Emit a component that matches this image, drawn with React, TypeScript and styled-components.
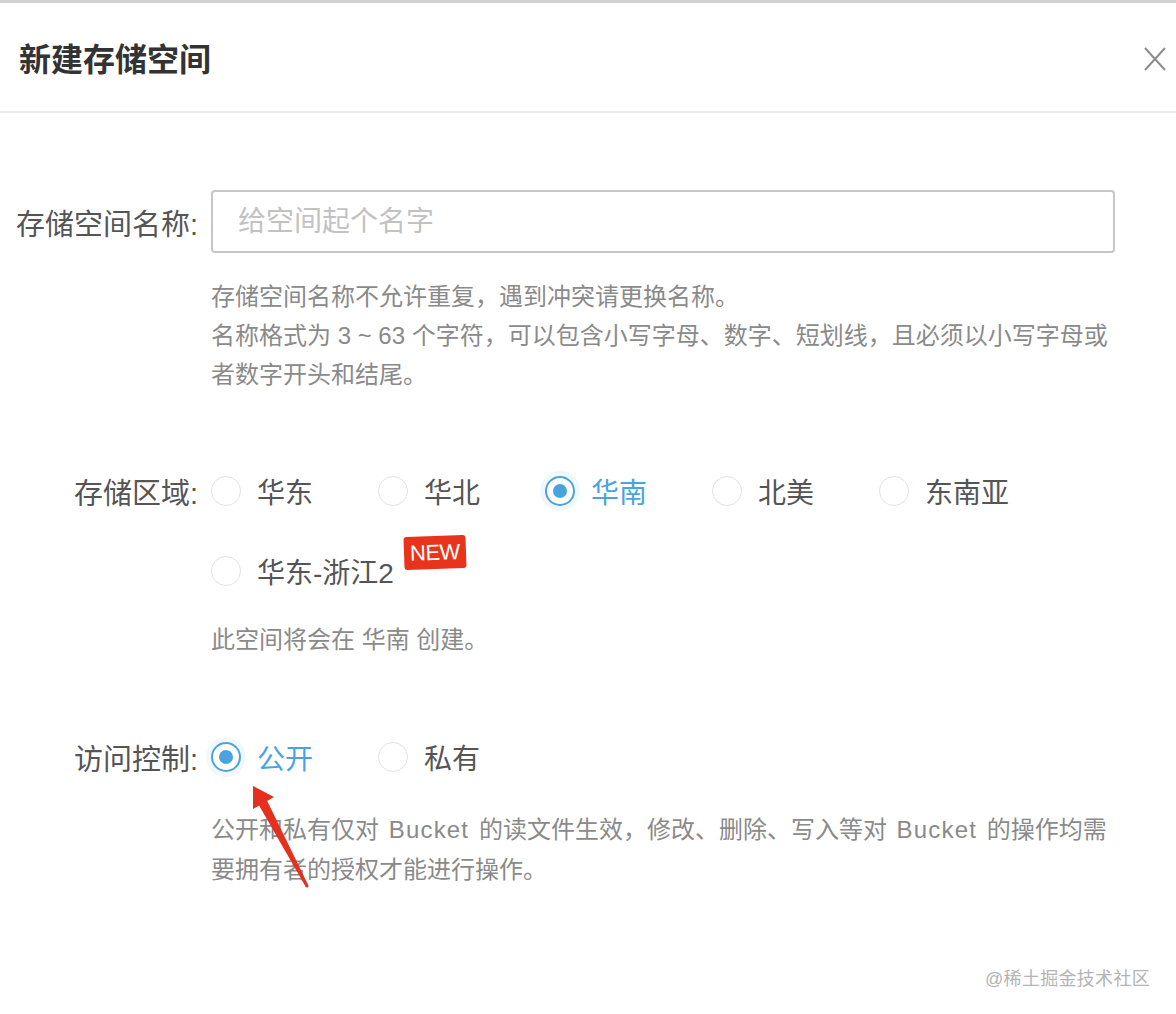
import React from "react";
import styled, {createGlobalStyle} from "styled-components";

const GlobalStyle = createGlobalStyle`
  html, body {
    margin: 0;
    padding: 0;
    background: #ffffff;
  }
  body {
    font-family: "Liberation Sans", "Noto Sans CJK SC", sans-serif;
  }
  * {
    box-sizing: border-box;
  }
`;

const blue = "#4aa3de";

const Dialog = styled.div`
  position: relative;
  width: 1176px;
  height: 1014px;
  background: #ffffff;
  border-top: 3px solid #d2d2d2;
  overflow: hidden;
`;

const Header = styled.div`
  height: 110px;
  display: flex;
  align-items: center;
  justify-content: space-between;
  padding: 0 8px 0 19px;
  border-bottom: 2px solid #e9e9e9;
`;

const Title = styled.h1`
  margin: 0;
  font-size: 32px;
  font-weight: 700;
  color: #333333;
`;

const CloseButton = styled.button`
  width: 26px;
  height: 28px;
  margin-top: 3px;
  padding: 0;
  border: none;
  background: none;
  display: flex;
  align-items: center;
  justify-content: center;
  cursor: pointer;
`;

const Body = styled.div`
  padding: 77px 61px 0 0;
  display: flex;
  flex-direction: column;
`;

const FormItem = styled.div<{ $top?: number }>`
  display: grid;
  grid-template-columns: 211px 1fr;
  align-items: start;
  margin-top: ${p => p.$top ?? 0}px;
`;

const Label = styled.label<{ $height: number }>`
  height: ${p => p.$height}px;
  display: flex;
  align-items: center;
  justify-content: flex-end;
  padding-right: 13px;
  font-size: 29px;
  color: #555555;
  white-space: nowrap;
`;

const Content = styled.div`
  display: flex;
  flex-direction: column;
`;

const TextInput = styled.input`
  width: 904px;
  height: 63px;
  border: 2px solid #c6c6c6;
  border-radius: 4px;
  padding: 0 25px;
  font-family: inherit;
  font-size: 28px;
  color: #333333;
  outline: none;

  &::placeholder {
    color: #c2c2c2;
  }
`;

const Help = styled.div<{ $top: number; $line: number }>`
  margin-top: ${p => p.$top}px;
  font-size: 24px;
  line-height: ${p => p.$line}px;
  color: #8a8a8a;
  white-space: nowrap;
`;

const Latin = styled.span`
  margin: 0 3px;
  letter-spacing: 1.2px;
`;

const RadioGroup = styled.div`
  display: flex;
  flex-wrap: wrap;
  row-gap: 40px;
  width: 904px;
`;

const Option = styled.div`
  position: relative;
  width: 167px;
  height: 40px;
  display: flex;
  align-items: center;
  gap: 16px;
  cursor: pointer;
`;

const Circle = styled.span<{ $checked: boolean }>`
  flex: none;
  width: 30px;
  height: 30px;
  border-radius: 50%;
  border: ${p => (p.$checked ? `2.5px solid ${blue}` : "1.5px solid #e2e2e2")};
  box-shadow: ${p => (p.$checked ? "0 0 0 5px rgba(74, 163, 222, 0.08)" : "none")};
  display: flex;
  align-items: center;
  justify-content: center;

  &::after {
    content: "";
    display: ${p => (p.$checked ? "block" : "none")};
    width: 14px;
    height: 14px;
    border-radius: 50%;
    background: ${blue};
  }
`;

const OptionText = styled.span<{ $checked: boolean }>`
  position: relative;
  font-size: 28px;
  color: ${p => (p.$checked ? blue : "#555555")};
  white-space: nowrap;
`;

const NewBadge = styled.span`
  position: absolute;
  left: calc(100% + 10px);
  top: -15px;
  padding: 3px 6px;
  background: #e8341c;
  border-radius: 3px;
  color: #ffffff;
  font-size: 22px;
  line-height: 27px;
  letter-spacing: -0.5px;
  transform: rotate(-2deg);
`;

const ArrowMark = styled.svg`
  position: absolute;
  left: 240px;
  top: 775px;
  width: 80px;
  height: 120px;
`;

const Watermark = styled.div`
  position: absolute;
  right: 26px;
  bottom: 24px;
  font-size: 18px;
  color: #b4b4b4;
  letter-spacing: 0.3px;
`;

interface RadioItem {
    text: string;
    badge?: string;
}

interface RadioListProps {
    items: RadioItem[];
    value: string;
}

const RadioList = (props: RadioListProps) => {
    const {items, value} = props;
    return (
        <RadioGroup>
            {items.map(item => {
                const checked = item.text === value;
                return (
                    <Option key={item.text}>
                        <Circle $checked={checked}/>
                        <OptionText $checked={checked}>
                            {item.text}
                            {item.badge && <NewBadge>{item.badge}</NewBadge>}
                        </OptionText>
                    </Option>
                );
            })}
        </RadioGroup>
    );
};

const regions: RadioItem[] = [
    {text: "华东"},
    {text: "华北"},
    {text: "华南"},
    {text: "北美"},
    {text: "东南亚"},
    {text: "华东-浙江2", badge: "NEW"},
];

const access: RadioItem[] = [{text: "公开"}, {text: "私有"}];

const nameHelp = [
    "存储空间名称不允许重复，遇到冲突请更换名称。",
    "名称格式为 3 ~ 63 个字符，可以包含小写字母、数字、短划线，且必须以小写字母或",
    "者数字开头和结尾。",
];

export default function App() {
    return (
        <>
            <GlobalStyle/>
            <Dialog>
                <Header>
                    <Title>新建存储空间</Title>
                    <CloseButton aria-label="关闭">
                        <svg width="24" height="26" viewBox="0 0 24 26">
                            <path d="M2 2 L22 24 M22 2 L2 24" stroke="#8c8c8c" strokeWidth="2" fill="none"/>
                        </svg>
                    </CloseButton>
                </Header>

                <Body>
                    <FormItem>
                        <Label $height={63}>存储空间名称:</Label>
                        <Content>
                            <TextInput placeholder="给空间起个名字"/>
                            <Help $top={24} $line={39}>
                                {nameHelp.map(line => <div key={line}>{line}</div>)}
                            </Help>
                        </Content>
                    </FormItem>

                    <FormItem $top={77}>
                        <Label $height={40}>存储区域:</Label>
                        <Content>
                            <RadioList items={regions} value="华南"/>
                            <Help $top={29} $line={39}>此空间将会在 华南 创建。</Help>
                        </Content>
                    </FormItem>

                    <FormItem $top={78}>
                        <Label $height={40}>访问控制:</Label>
                        <Content>
                            <RadioList items={access} value="公开"/>
                            <Help $top={33} $line={40}>
                                <div>
                                    公开和私有仅对 <Latin>Bucket</Latin> 的读文件生效，修改、删除、写入等对 <Latin>Bucket</Latin> 的操作均需
                                </div>
                                <div>要拥有者的授权才能进行操作。</div>
                            </Help>
                        </Content>
                    </FormItem>
                </Body>

                {/* annotation arrow drawn over the form */}
                <ArrowMark viewBox="0 0 80 120">
                    <polygon points="13,8 34,19 13,31" fill="#e5301f"/>
                    <polygon points="26.5,21.5 68.3,107.3 65.7,108.7 18.5,26.5" fill="#e5301f"/>
                    <circle cx="67" cy="108" r="1.5" fill="#e5301f"/>
                </ArrowMark>

                <Watermark>@稀土掘金技术社区</Watermark>
            </Dialog>
        </>
    );
}
